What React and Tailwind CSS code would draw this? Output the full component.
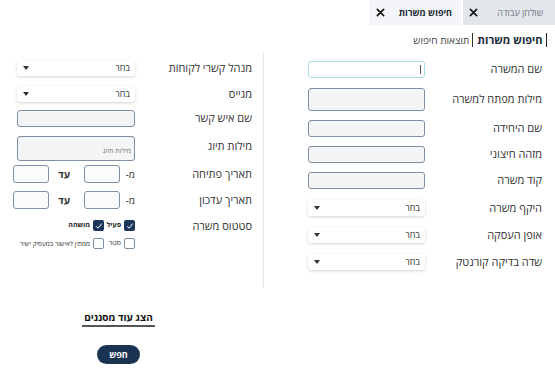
import React from 'react';

const font = { fontFamily: '"Open Sans", "Liberation Sans", sans-serif' };

function XIcon() {
  return (
    <svg width="9" height="9" viewBox="0 0 10 10" className="shrink-0">
      <path d="M1.5 1.5 L8.5 8.5 M8.5 1.5 L1.5 8.5" stroke="#111" strokeWidth="1.8" strokeLinecap="round" />
    </svg>
  );
}

function TextBox({ w = 'w-[117px]', h = 'h-[17px]', focused = false, bg = 'bg-[#f5f5f5]', children }) {
  return (
    <div
      className={`${w} ${h} rounded-[3px] border shrink-0 relative ${
        focused ? 'border-[#a9dbe3] bg-white' : `border-[#7d8fa1] ${bg}`
      }`}
    >
      {focused && <span className="absolute right-[3px] top-[3px] w-[1.5px] h-[9px] bg-[#555]" />}
      {children}
    </div>
  );
}

function Select({ w = 'w-[117px]' }) {
  return (
    <div className={`${w} h-[16px] bg-white rounded-[3px] shadow-[0_1px_3px_rgba(0,0,0,0.18)] flex items-center justify-between pr-[5px] pl-[6px] shrink-0`}>
      <span className="text-[9px] text-[#333]">בחר</span>
      <svg width="6" height="4" viewBox="0 0 6 4">
        <path d="M0 0 L6 0 L3 4 Z" fill="#333" />
      </svg>
    </div>
  );
}

function Row({ label, children, mt, h }) {
  return (
    <div className={`flex items-center ${mt} ${h}`}>
      <div className="w-[117px] shrink-0 text-[11px] text-[#333] whitespace-nowrap">{label}</div>
      {children}
    </div>
  );
}

function Check({ checked }) {
  return checked ? (
    <div className="w-[11px] h-[11px] rounded-[2px] bg-[#1b365a] flex items-center justify-center shrink-0">
      <svg width="8" height="8" viewBox="0 0 8 8">
        <path d="M1.2 4.3 L3 6.2 L6.8 1.5" stroke="#fff" strokeWidth="1" fill="none" />
      </svg>
    </div>
  ) : (
    <div className="w-[11px] h-[11px] rounded-[2px] border border-[#7d8fa1] bg-white shrink-0" />
  );
}

function DateRange() {
  return (
    <div className="flex items-center">
      <span className="text-[10px] text-[#333] w-[15px]">מ-</span>
      <TextBox w="w-[36px]" h="h-[18px]" bg="bg-[#fafbfc]" />
      <span className="text-[10px] font-bold text-[#333] w-[35px] pr-[14px]">עד</span>
      <TextBox w="w-[36px]" h="h-[18px]" bg="bg-[#fafbfc]" />
    </div>
  );
}

export default function App() {
  return (
    <div dir="rtl" style={font} className="w-[555px] h-[373px] bg-white overflow-hidden">
      {/* tabs */}
      <div className="flex h-[25px]">
        <div className="w-[92px] bg-[#e3e7eb] flex items-center justify-between pr-[12px] pl-[6px]">
          <span className="text-[9px] text-[#6b7380]">שולחן עבודה</span>
          <XIcon />
        </div>
        <div className="w-[92px] mr-[2px] bg-[#f3f5f8] flex items-center justify-between pr-[9px] pl-[7px]">
          <span className="text-[9px] font-bold text-[#1f2937]">חיפוש משרות</span>
          <XIcon />
        </div>
      </div>

      {/* sub nav */}
      <div className="flex items-center h-[22px] mt-[4px] pr-[8px]">
        <span className="w-[1.5px] h-[14px] bg-[#222]" />
        <span className="text-[11px] font-bold text-[#1c2a3a] mr-[3px]">חיפוש משרות</span>
        <span className="w-[1px] h-[14px] bg-[#333] mr-[4px]" />
        <span className="text-[10px] text-[#444] mr-[3px]">תוצאות חיפוש</span>
      </div>

      <div className="flex">
        {/* right column */}
        <div className="w-[292px] h-[235px] border-l border-[#e5e7eb] pr-[13px] mt-[2px]">
          <Row label="שם המשרה" mt="mt-[8px]" h="h-[17px]">
            <TextBox focused />
          </Row>
          <Row label="מילות מפתח למשרה" mt="mt-[10px]" h="h-[23px]">
            <TextBox h="h-[23px]" />
          </Row>
          <Row label="שם היחידה" mt="mt-[9px]" h="h-[17px]">
            <TextBox />
          </Row>
          <Row label="מזהה חיצוני" mt="mt-[9px]" h="h-[17px]">
            <TextBox />
          </Row>
          <Row label="קוד משרה" mt="mt-[9px]" h="h-[17px]">
            <TextBox />
          </Row>
          <Row label="היקף משרה" mt="mt-[11px]" h="h-[16px]">
            <Select />
          </Row>
          <Row label="אופן העסקה" mt="mt-[11px]" h="h-[16px]">
            <Select />
          </Row>
          <Row label="שדה בדיקה קורנטק" mt="mt-[11px]" h="h-[16px]">
            <Select />
          </Row>
        </div>

        {/* left column */}
        <div className="w-[263px] pr-[11px]">
          <Row label="מנהל קשרי לקוחות" mt="mt-[9px]" h="h-[16px]">
            <Select w="w-[118px]" />
          </Row>
          <Row label="מגייס" mt="mt-[10px]" h="h-[16px]">
            <Select w="w-[118px]" />
          </Row>
          <Row label="שם איש קשר" mt="mt-[8px]" h="h-[17px]">
            <TextBox w="w-[118px]" />
          </Row>
          <div className="flex mt-[9px] h-[25px]">
            <div className="w-[117px] shrink-0 text-[11px] text-[#333] pt-[2px]">מילות תיוג</div>
            <TextBox w="w-[118px]" h="h-[25px]">
              <span className="absolute right-[3px] top-[9px] text-[7px] text-[#777]">מילות תיוג</span>
            </TextBox>
          </div>
          <Row label="תאריך פתיחה" mt="mt-[4px]" h="h-[18px]">
            <DateRange />
          </Row>
          <Row label="תאריך עדכון" mt="mt-[8px]" h="h-[18px]">
            <DateRange />
          </Row>
          <div className="flex mt-[11px]">
            <div className="w-[117px] shrink-0 text-[11px] text-[#333] leading-[11px]">סטטוס משרה</div>
            <div className="flex flex-col gap-[7px]">
              <div className="flex items-center">
                <Check checked />
                <span className="text-[7px] font-bold text-[#222] mr-[3px] w-[17px]">פעיל</span>
                <Check checked />
                <span className="text-[7px] font-bold text-[#222] mr-[3px]">מושהה</span>
              </div>
              <div className="flex items-center">
                <Check />
                <span className="text-[7px] text-[#333] mr-[3px] w-[17px]">סגור</span>
                <Check />
                <span className="text-[6.5px] text-[#333] mr-[3px] whitespace-nowrap">ממתין לאישור במעסיק ישיר</span>
              </div>
            </div>
          </div>
        </div>
      </div>

      {/* bottom */}
      <div className="flex justify-end">
        <div className="w-[237px] flex flex-col items-center mt-[22px]">
          <span className="text-[10px] font-bold text-[#111] border-b-2 border-[#555] pb-[1px] px-[2px] leading-[14px]">הצג עוד מסננים</span>
          <button className="mt-[18px] w-[43px] h-[19px] rounded-full bg-[#1b3353] text-white text-[9px] font-bold">חפש</button>
        </div>
      </div>
    </div>
  );
}
